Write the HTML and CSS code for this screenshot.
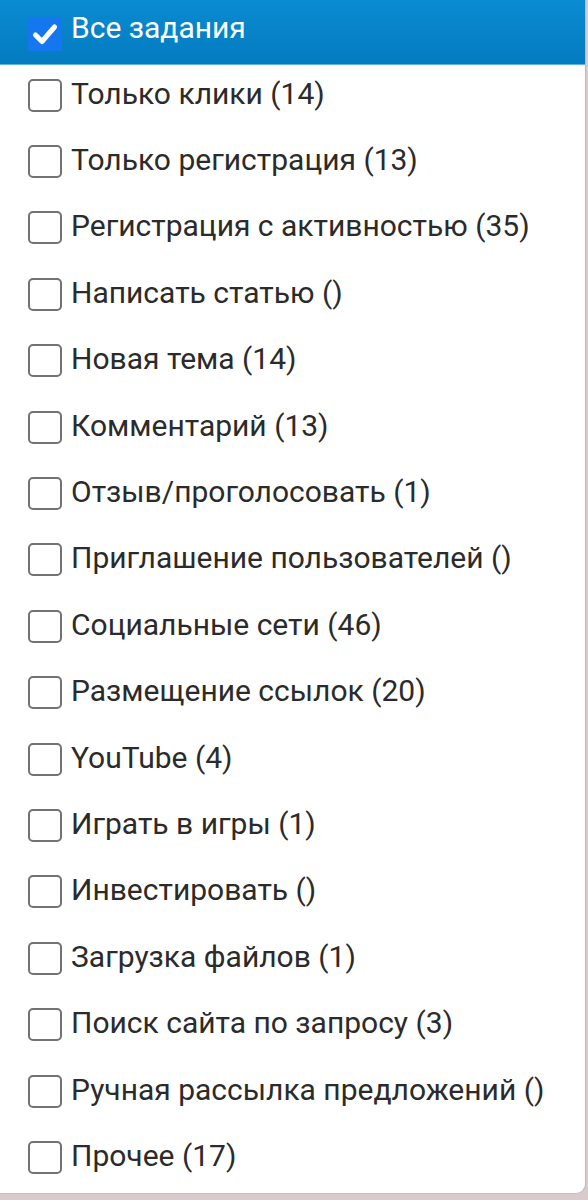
FILE: index.html
```html
<!DOCTYPE html>
<html lang="ru">
<head>
<meta charset="utf-8">
<link rel="stylesheet" href="styles.css">
</head>
<body>
<div class="panel">
  <div class="header">
    <span class="box checked"><svg viewBox="0 0 34 34" width="34" height="34"><path d="M7.5 18 L14 24.5 L26.5 10" fill="none" stroke="#fff" stroke-width="5" stroke-linecap="round" stroke-linejoin="round"/></svg></span>
    <span class="label head-label">Все задания</span>
  </div>
  <ul class="list">
    <li class="row"><span class="box"></span><span class="label">Только клики (14)</span></li>
    <li class="row"><span class="box"></span><span class="label">Только регистрация (13)</span></li>
    <li class="row"><span class="box"></span><span class="label">Регистрация с активностью (35)</span></li>
    <li class="row"><span class="box"></span><span class="label">Написать статью ()</span></li>
    <li class="row"><span class="box"></span><span class="label">Новая тема (14)</span></li>
    <li class="row"><span class="box"></span><span class="label">Комментарий (13)</span></li>
    <li class="row"><span class="box"></span><span class="label">Отзыв/проголосовать (1)</span></li>
    <li class="row"><span class="box"></span><span class="label">Приглашение пользователей ()</span></li>
    <li class="row"><span class="box"></span><span class="label">Социальные сети (46)</span></li>
    <li class="row"><span class="box"></span><span class="label">Размещение ссылок (20)</span></li>
    <li class="row"><span class="box"></span><span class="label">YouTube (4)</span></li>
    <li class="row"><span class="box"></span><span class="label">Играть в игры (1)</span></li>
    <li class="row"><span class="box"></span><span class="label">Инвестировать ()</span></li>
    <li class="row"><span class="box"></span><span class="label">Загрузка файлов (1)</span></li>
    <li class="row"><span class="box"></span><span class="label">Поиск сайта по запросу (3)</span></li>
    <li class="row"><span class="box"></span><span class="label">Ручная рассылка предложений ()</span></li>
    <li class="row"><span class="box"></span><span class="label">Прочее (17)</span></li>
  </ul>
</div>
</body>
</html>
```
FILE: styles.css
```css
html, body {
  margin: 0;
  padding: 0;
}
body {
  background: #d9cbcb;
  font-family: Roboto, "Noto Sans", sans-serif;
  height: 1200px;
  overflow: hidden;
}
.panel {
  width: 585px;
  height: 1193px;
  background: #fff;
  border-right: 1px solid #bdbdbd;
  border-bottom: 1px solid #c9bdbd;
  border-bottom-right-radius: 10px;
  overflow: hidden;
}
.header {
  height: 65px;
  box-sizing: border-box;
  background: linear-gradient(#0a8bd2, #047bbf);
  border-bottom: 1px solid #5fb2e4;
  display: flex;
  align-items: center;
  padding-left: 28px;
  gap: 9px;
}
.header .box {
  margin-top: 4px;
}
.label {
  font-size: 30px;
  color: #2b2b2b;
  white-space: nowrap;
  line-height: 1;
}
.header .head-label {
  color: #fff;
  padding-bottom: 8px;
}
.list {
  list-style: none;
  margin: 0;
  padding: 0;
}
.row {
  height: 66.4px;
  box-sizing: border-box;
  display: flex;
  align-items: center;
  padding-left: 28px;
  padding-bottom: 6px;
  gap: 9px;
}
.row .label {
  padding-bottom: 3px;
}
.box {
  width: 34px;
  height: 33px;
  box-sizing: border-box;
  border: 2px solid #727272;
  border-radius: 5px;
  flex: none;
  display: flex;
  align-items: center;
  justify-content: center;
}
.box.checked {
  width: 34px;
  height: 34px;
  border: none;
  border-radius: 2px;
  background: #1577f0;
}
```
